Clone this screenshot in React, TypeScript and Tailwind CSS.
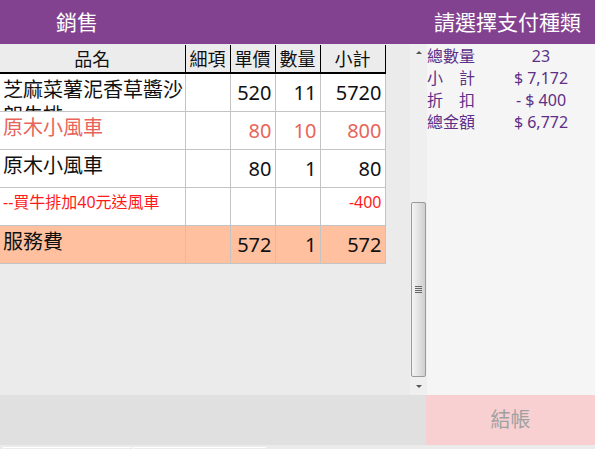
import React from "react"

interface Row {
  name: string
  price: string
  qty: string
  total: string
  tone: "normal" | "gift" | "promo" | "fee"
}

const rows: Row[] = [
  { name: "芝麻菜薯泥香草醬沙朗牛排", price: "520", qty: "11", total: "5720", tone: "normal" },
  { name: "原木小風車", price: "80", qty: "10", total: "800", tone: "gift" },
  { name: "原木小風車", price: "80", qty: "1", total: "80", tone: "normal" },
  { name: "--買牛排加40元送風車", price: "", qty: "", total: "-400", tone: "promo" },
  { name: "服務費", price: "572", qty: "1", total: "572", tone: "fee" },
]

const summary = [
  { label: "總數量", value: "23" },
  { label: "小　計", value: "$ 7,172" },
  { label: "折　扣", value: "- $ 400" },
  { label: "總金額", value: "$ 6,772" },
]

const font = "font-['Noto_Sans','Noto_Sans_CJK_TC',sans-serif]"

function rowText(tone: Row["tone"]) {
  if (tone === "gift") return "text-[#e8645a] text-[20px]"
  if (tone === "promo") return "text-[#ff1a1a] text-[16px]"
  return "text-[#111] text-[20px]"
}

export default function App() {
  return (
    <div className={`flex h-[449px] w-[595px] flex-col overflow-hidden bg-[#ebebeb] ${font}`}>
      {/* title bar */}
      <div className="flex h-[44px] shrink-0 items-center justify-between bg-[#83428f] pl-[56px] pr-[14px] text-[21px] leading-none text-white">
        <span>銷售</span>
        <span>請選擇支付種類</span>
      </div>

      <div className="flex h-[351px] shrink-0">
        {/* order table */}
        <div className="w-[410px] shrink-0 pt-[1px]">
          <table className="w-[385px] table-fixed border-collapse">
            <colgroup>
              <col className="w-[185px]" />
              <col className="w-[45px]" />
              <col className="w-[45px]" />
              <col className="w-[45px]" />
              <col className="w-[65px]" />
            </colgroup>
            <thead>
              <tr className="h-[28px] bg-[#ececec] text-[18px] leading-none text-[#111]">
                <th className="border-b-2 border-r border-black font-normal">品名</th>
                <th className="border-b-2 border-x border-black font-normal">細項</th>
                <th className="border-b-2 border-x border-black font-normal">單價</th>
                <th className="border-b-2 border-x border-black font-normal">數量</th>
                <th className="border-b-2 border-x border-black font-normal">小計</th>
              </tr>
            </thead>
            <tbody>
              {rows.map((r, i) => (
                <tr
                  key={i}
                  className={`h-[38px] ${r.tone === "fee" ? "bg-[#ffc09f]" : "bg-white"} ${rowText(r.tone)}`}
                >
                  <td className="border border-l-0 border-[#c4c4c4] p-0 align-top">
                    <div className={`h-[37px] overflow-hidden pl-[3px] ${r.tone === "promo" ? "pt-[3px] leading-[22px]" : "pt-[3px] leading-[26px]"}`}>
                      {r.name}
                    </div>
                  </td>
                  <td className="border border-[#c4c4c4]" />
                  <td className="border border-[#c4c4c4] pr-[3px] text-right">{r.price}</td>
                  <td className="border border-[#c4c4c4] pr-[3px] text-right">{r.qty}</td>
                  <td
                    className={`border border-[#c4c4c4] pr-[3px] text-right ${
                      r.tone === "promo" ? "pt-[3px] align-top leading-[22px]" : ""
                    }`}
                  >
                    {r.total}
                  </td>
                </tr>
              ))}
            </tbody>
          </table>
        </div>

        {/* scrollbar */}
        <div className="flex w-[17px] shrink-0 flex-col bg-[#efefef]">
          <div className="flex h-[17px] items-center justify-center">
            <div className="h-0 w-0 border-x-[3px] border-b-[3px] border-x-transparent border-b-[#555]" />
          </div>
          <div className="h-[141px]" />
          <div className="mx-[1px] flex h-[175px] items-center justify-center rounded-[2px] border border-[#9a9a9a] bg-gradient-to-r from-[#f4f4f4] via-[#e2e2e2] to-[#cfcfcf]">
            <div className="flex flex-col gap-[1px]">
              <div className="h-[1px] w-[7px] bg-[#666]" />
              <div className="h-[1px] w-[7px] bg-[#666]" />
              <div className="h-[1px] w-[7px] bg-[#666]" />
              <div className="h-[1px] w-[7px] bg-[#666]" />
            </div>
          </div>
          <div className="flex flex-1 items-center justify-center">
            <div className="h-0 w-0 border-x-[3px] border-t-[3px] border-x-transparent border-t-[#555]" />
          </div>
        </div>

        {/* summary */}
        <div className="flex-1 bg-[#f5f5f5] pt-[1px] text-[16px] leading-[22px] text-[#5e2f87]">
          {summary.map((s) => (
            <div key={s.label} className="flex">
              <span className="w-[80px] whitespace-pre">{s.label}</span>
              <span className="w-[68px] text-center">{s.value}</span>
            </div>
          ))}
        </div>
      </div>

      {/* bottom action bar */}
      <div className="flex h-[50px] shrink-0">
        <div className="w-[426px] bg-[#e0e0e0]" />
        <button className="flex flex-1 items-center justify-center bg-[#f8d0d2] text-[20px] text-[#a0a0a0]">
          結帳
        </button>
      </div>

      {/* status strip */}
      <div className="flex flex-1 gap-[1px] pl-[3px] pt-[2px]">
        <div className="w-[129px] border-l border-t border-white" />
        <div className="w-[133px] border-l border-t border-white" />
      </div>
    </div>
  )
}
